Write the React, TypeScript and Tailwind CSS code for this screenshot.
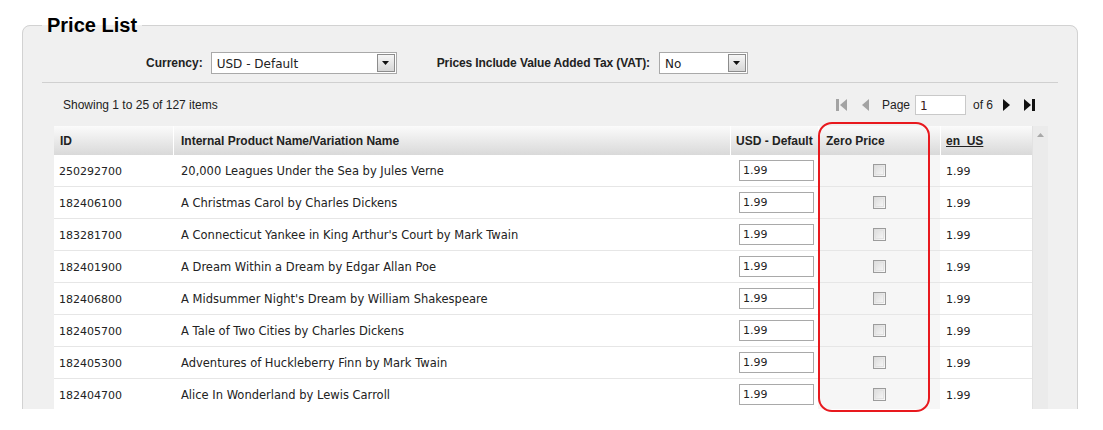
import React from "react";

const rows: [string, string][] = [
  ["250292700", "20,000 Leagues Under the Sea by Jules Verne"],
  ["182406100", "A Christmas Carol by Charles Dickens"],
  ["183281700", "A Connecticut Yankee in King Arthur's Court by Mark Twain"],
  ["182401900", "A Dream Within a Dream by Edgar Allan Poe"],
  ["182406800", "A Midsummer Night's Dream by William Shakespeare"],
  ["182405700", "A Tale of Two Cities by Charles Dickens"],
  ["182405300", "Adventures of Huckleberry Finn by Mark Twain"],
  ["182404700", "Alice In Wonderland by Lewis Carroll"],
];

const FakeSelect = ({ value, width }: { value: string; width: string }) => (
  <div
    className={`flex h-[22px] items-center justify-between border border-[#a9a9a9] bg-white pl-[5px] pr-[1px] ${width}`}
  >
    <span className="pt-[1px] font-['DejaVu_Sans',sans-serif] text-[12px] text-[#222]">{value}</span>
    <span className="flex h-[18px] w-[18px] items-center justify-center border border-[#8c8c8c] bg-gradient-to-b from-[#f6f6f6] to-[#d6d6d6]">
      <svg width="7" height="4" viewBox="0 0 7 4">
        <path d="M0 0h7L3.5 4z" fill="#111" />
      </svg>
    </span>
  </div>
);

const Tri = ({ dir, color, bar }: { dir: "l" | "r"; color: string; bar?: boolean }) => (
  <svg width={bar ? 12 : 7} height="12" viewBox={bar ? "0 0 12 12" : "0 0 7 12"}>
    {dir === "l" ? (
      bar ? (
        <>
          <rect x="0" y="0" width="3" height="12" fill={color} />
          <path d="M11 0v12L4 6z" fill={color} />
        </>
      ) : (
        <path d="M7 0v12L0 6z" fill={color} />
      )
    ) : bar ? (
      <>
        <path d="M0 0v12l7-6z" fill={color} />
        <rect x="8" y="0" width="3" height="12" fill={color} />
      </>
    ) : (
      <path d="M0 0v12l7-6z" fill={color} />
    )}
  </svg>
);

const Checkbox = () => (
  <div className="h-[13px] w-[13px] border border-[#9c9c9c] bg-gradient-to-br from-[#d9d9d9] to-[#fbfbfb] p-[1px]">
    <div className="h-full w-full border border-[#e2e2e2]" />
  </div>
);

export default function App() {
  const head = "font-['Liberation_Sans',Arial,sans-serif] text-[12px] font-bold text-[#222]";
  const cell = "font-['DejaVu_Sans',Verdana,sans-serif] text-[11px] text-[#222]";

  return (
    <div className="relative h-[430px] w-[1103px] bg-white">
      <div className="h-[409px] overflow-hidden pt-[14px]">
        <fieldset className="ml-[22px] h-[600px] w-[1056px] rounded-[8px] border border-[#d2d2d2] bg-[#f0f0f0]">
          <legend className="ml-[19px] px-[5px] font-['Liberation_Sans',Arial,sans-serif] text-[20px] font-bold leading-[23px] text-black">
            Price List
          </legend>

          {/* Currency / VAT filters */}
          <div className="mt-[15px] flex h-[22px] items-center pl-[123px]">
            <span className={head}>Currency:</span>
            <div className="ml-[8px]">
              <FakeSelect value="USD - Default" width="w-[186px]" />
            </div>
            <span className={`${head} ml-[40px] tracking-[-0.1px]`}>Prices Include Value Added Tax (VAT):</span>
            <div className="ml-[9px]">
              <FakeSelect value="No" width="w-[89px]" />
            </div>
          </div>

          <div className="mx-[19px] mt-[8px] border-t border-[#d0d0d0]" />

          {/* Showing + pager */}
          <div className="mt-[12px] flex h-[20px] items-center justify-between pl-[40px] pr-[41px]">
            <span className="font-['Liberation_Sans',Arial,sans-serif] text-[12px] text-[#222]">
              Showing 1 to 25 of 127 items
            </span>
            <div className="flex items-center">
              <Tri dir="l" color="#a3a3a3" bar />
              <span className="ml-[14px]">
                <Tri dir="l" color="#a3a3a3" />
              </span>
              <span className="ml-[13px] font-['Liberation_Sans',Arial,sans-serif] text-[12px] text-[#222]">
                Page
              </span>
              <div className="ml-[5px] flex h-[20px] w-[51px] items-center border border-[#c9c9c9] bg-white pl-[4px] pt-[1px] font-['DejaVu_Sans',sans-serif] text-[12px] text-[#3a1a1a]">
                1
              </div>
              <span className="ml-[7px] font-['Liberation_Sans',Arial,sans-serif] text-[12px] text-[#222]">
                of 6
              </span>
              <span className="ml-[10px]">
                <Tri dir="r" color="#111" />
              </span>
              <span className="ml-[14px]">
                <Tri dir="r" color="#111" bar />
              </span>
            </div>
          </div>

          {/* Grid */}
          <div className="ml-[31px] mt-[11px] flex">
            <div className="w-[978px]">
              <div className="flex h-[29px] bg-gradient-to-b from-[#fbfbfb] to-[#d9d9d9]">
                <div className={`${head} flex w-[119px] items-center pl-[6px]`}>ID</div>
                <div className={`${head} flex w-[557px] items-center border-l border-white pl-[7px]`}>
                  Internal Product Name/Variation Name
                </div>
                <div className={`${head} flex w-[88px] items-center border-l border-white pl-[5px]`}>
                  USD - Default
                </div>
                <div className={`${head} flex w-[122px] items-center border-l border-white pl-[7px]`}>
                  Zero Price
                </div>
                <div className={`${head} flex w-[92px] items-center border-l border-white pl-[5px] underline`}>
                  en_US
                </div>
              </div>
              {rows.map(([id, name]) => (
                <div key={id} className="flex h-[32px] border-b border-[#e6e6e6] bg-white">
                  <div className={`${cell} flex w-[119px] items-center pl-[5px] pt-[3px]`}>{id}</div>
                  <div className="flex w-[557px] items-center pl-[8px] pt-[3px] font-['DejaVu_Sans',Verdana,sans-serif] text-[11.5px] text-[#222]">
                    {name}
                  </div>
                  <div className="flex w-[88px] items-center pl-[9px]">
                    <div className={`${cell} flex h-[21px] w-[75px] items-center border border-[#a9a9a9] bg-white pl-[3px] pt-[1px]`}>
                      1.99
                    </div>
                  </div>
                  <div className="flex w-[122px] items-center justify-center bg-[#f6f6f6] pl-[1px]">
                    <Checkbox />
                  </div>
                  <div className={`${cell} flex w-[92px] items-center pl-[6px] pt-[3px]`}>1.99</div>
                </div>
              ))}
            </div>
            <div className="flex h-[300px] w-[16px] justify-center border-l border-[#e2e2e2] bg-[#ebebeb] pt-[7px]">
              <svg width="7" height="4" viewBox="0 0 7 4">
                <path d="M3.5 0L7 4H0z" fill="#a8a8a8" />
              </svg>
            </div>
          </div>
        </fieldset>
      </div>

      {/* annotation around Zero Price column */}
      <div className="pointer-events-none absolute left-[818px] top-[122px] h-[290px] w-[112px] rounded-[14px] border-2 border-[#e8191e]" />
    </div>
  );
}
